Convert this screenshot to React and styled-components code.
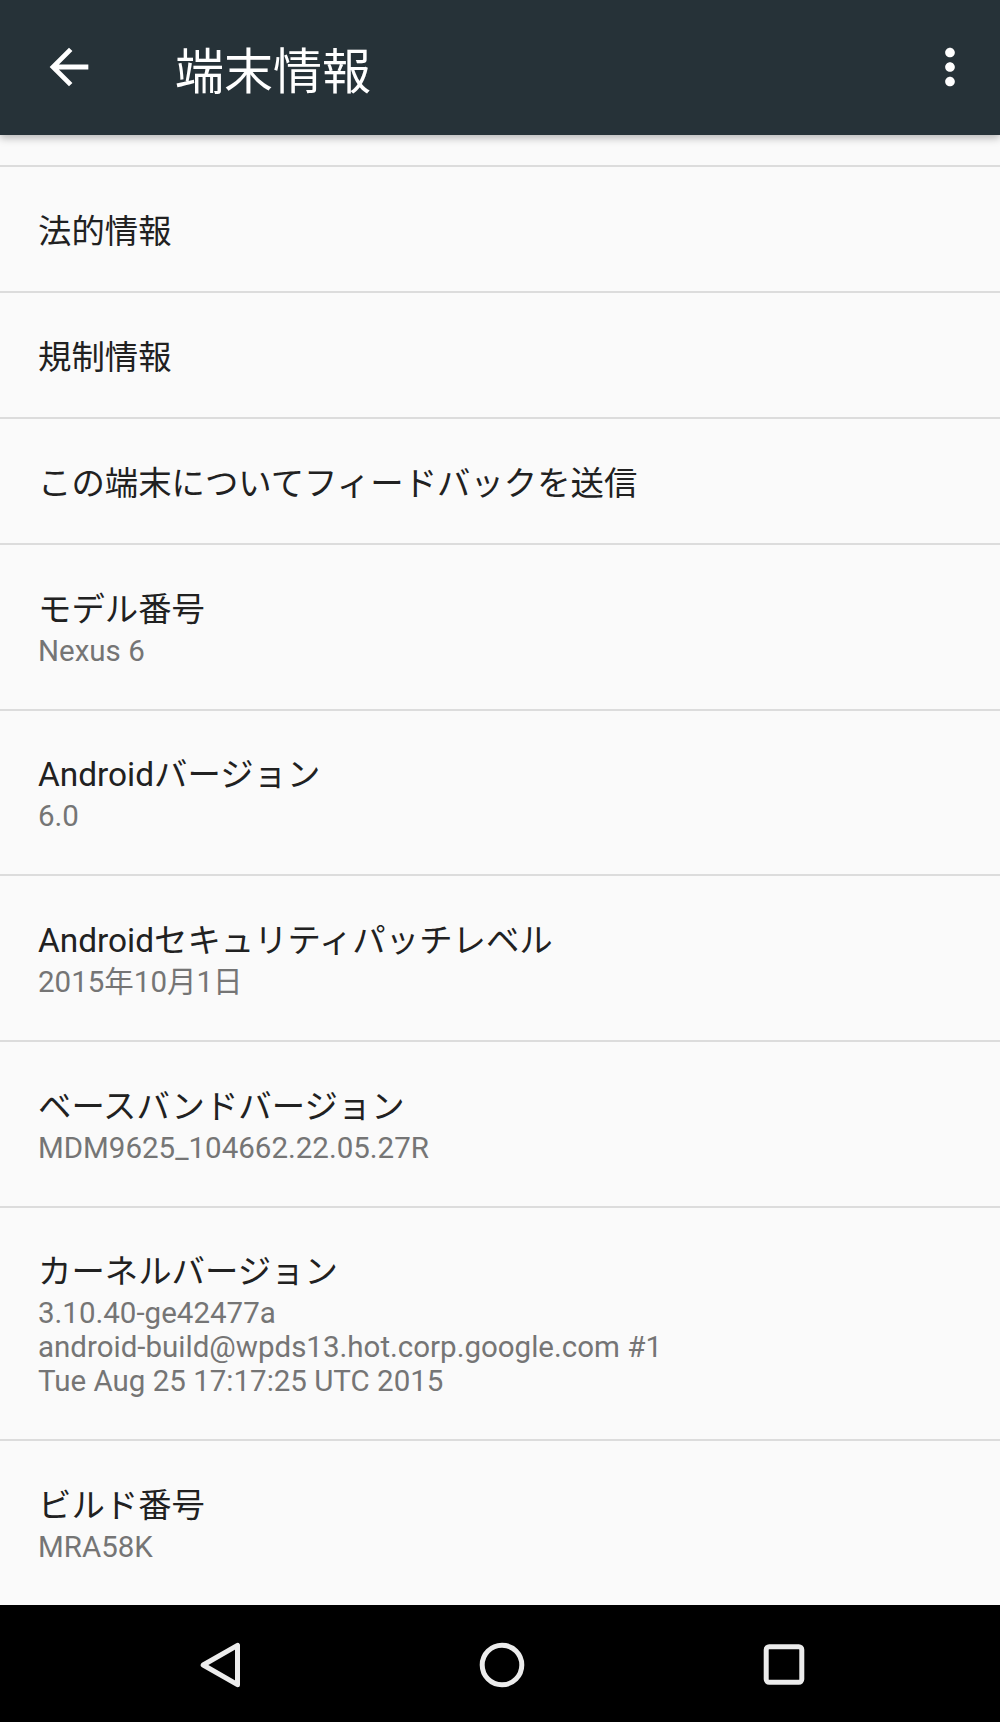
import styled, { createGlobalStyle } from "styled-components";

const GlobalStyle = createGlobalStyle`
  html, body {
    margin: 0;
    padding: 0;
    background: #fafafa;
  }
  body {
    font-family: Roboto, "Noto Sans CJK JP", sans-serif;
  }
  * {
    box-sizing: border-box;
  }
`;

const Screen = styled.div`
  width: 1000px;
  height: 1722px;
  display: flex;
  flex-direction: column;
  overflow: hidden;
  background: #fafafa;
`;

const AppBar = styled.header`
  height: 135px;
  flex-shrink: 0;
  display: flex;
  align-items: center;
  padding: 0 21px 0 40px;
  background: #263238;
  box-shadow: 0 3px 8px rgba(0, 0, 0, 0.28);
  position: relative;
  z-index: 1;
`;

const BarIcon = styled.svg`
  width: 58px;
  height: 58px;
  flex-shrink: 0;
  fill: #ffffff;
  margin-top: -2px;
`;

const AppTitle = styled.h1`
  flex: 1;
  margin: 0 0 0 77px;
  font-family: "Noto Sans CJK JP", sans-serif;
  font-size: 49px;
  font-weight: 400;
  line-height: 1;
  color: #ffffff;
`;

const List = styled.main`
  flex: 1;
  overflow: hidden;
`;

/* bottom of the row that is scrolled away under the toolbar */
const ClippedRow = styled.div`
  height: 32px;
  border-bottom: 2px solid #dcdcdc;
`;

const Item = styled.div`
  padding: ${(props) => (props.single ? "43px 38px 37px" : "42.7px 38px 41px")};
  border-bottom: 2px solid #dcdcdc;
`;

const Title = styled.div`
  font-size: 33.4px;
  line-height: 44px;
  color: #212121;
  white-space: nowrap;
`;

const Summary = styled.div`
  margin-top: ${(props) => (props.first ? "2px" : "0")};
  font-size: 29.5px;
  line-height: 34px;
  color: #757575;
  white-space: nowrap;
`;

const NavBar = styled.nav`
  height: 117px;
  flex-shrink: 0;
  display: flex;
  justify-content: center;
  align-items: center;
  gap: 202px;
  padding-left: 4px;
  background: #000000;
`;

const NavButton = styled.div`
  width: 80px;
  height: 80px;
  display: flex;
  align-items: center;
  justify-content: center;
  svg {
    width: 60px;
    height: 60px;
    fill: none;
    stroke: #ececec;
    stroke-width: 5;
    stroke-linejoin: round;
  }
`;

const items = [
  { title: "法的情報" },
  { title: "規制情報" },
  { title: "この端末についてフィードバックを送信" },
  { title: "モデル番号", lines: ["Nexus 6"] },
  { title: "Androidバージョン", lines: ["6.0"] },
  { title: "Androidセキュリティパッチレベル", lines: ["2015年10月1日"] },
  { title: "ベースバンドバージョン", lines: ["MDM9625_104662.22.05.27R"] },
  {
    title: "カーネルバージョン",
    lines: [
      "3.10.40-ge42477a",
      "android-build@wpds13.hot.corp.google.com #1",
      "Tue Aug 25 17:17:25 UTC 2015",
    ],
  },
  { title: "ビルド番号", lines: ["MRA58K"] },
];

export default function App() {
  return (
    <Screen>
      <GlobalStyle />
      <AppBar>
        <BarIcon viewBox="0 0 24 24">
          <path d="M20 11H7.83l5.59-5.59L12 4l-8 8 8 8 1.41-1.41L7.83 13H20v-2z" />
        </BarIcon>
        <AppTitle>端末情報</AppTitle>
        <BarIcon viewBox="0 0 24 24">
          <path d="M12 8c1.1 0 2-.9 2-2s-.9-2-2-2-2 .9-2 2 .9 2 2 2zm0 2c-1.1 0-2 .9-2 2s.9 2 2 2 2-.9 2-2-.9-2-2-2zm0 6c-1.1 0-2 .9-2 2s.9 2 2 2 2-.9 2-2-.9-2-2-2z" />
        </BarIcon>
      </AppBar>

      <List>
        <ClippedRow />
        {items.map((item) => (
          <Item key={item.title} single={!item.lines}>
            <Title>{item.title}</Title>
            {item.lines &&
              item.lines.map((line, i) => (
                <Summary key={i} first={i === 0}>
                  {line}
                </Summary>
              ))}
          </Item>
        ))}
      </List>

      <NavBar>
        <NavButton>
          <svg viewBox="0 0 60 60">
            <path d="M13.2 31 L47.5 11.3 L47.5 50.7 Z" />
          </svg>
        </NavButton>
        <NavButton>
          <svg viewBox="0 0 60 60">
            <circle cx="30" cy="31" r="19.8" />
          </svg>
        </NavButton>
        <NavButton>
          <svg viewBox="0 0 60 60">
            <rect x="12.2" y="12.7" width="35.6" height="35.6" rx="3" />
          </svg>
        </NavButton>
      </NavBar>
    </Screen>
  );
}
